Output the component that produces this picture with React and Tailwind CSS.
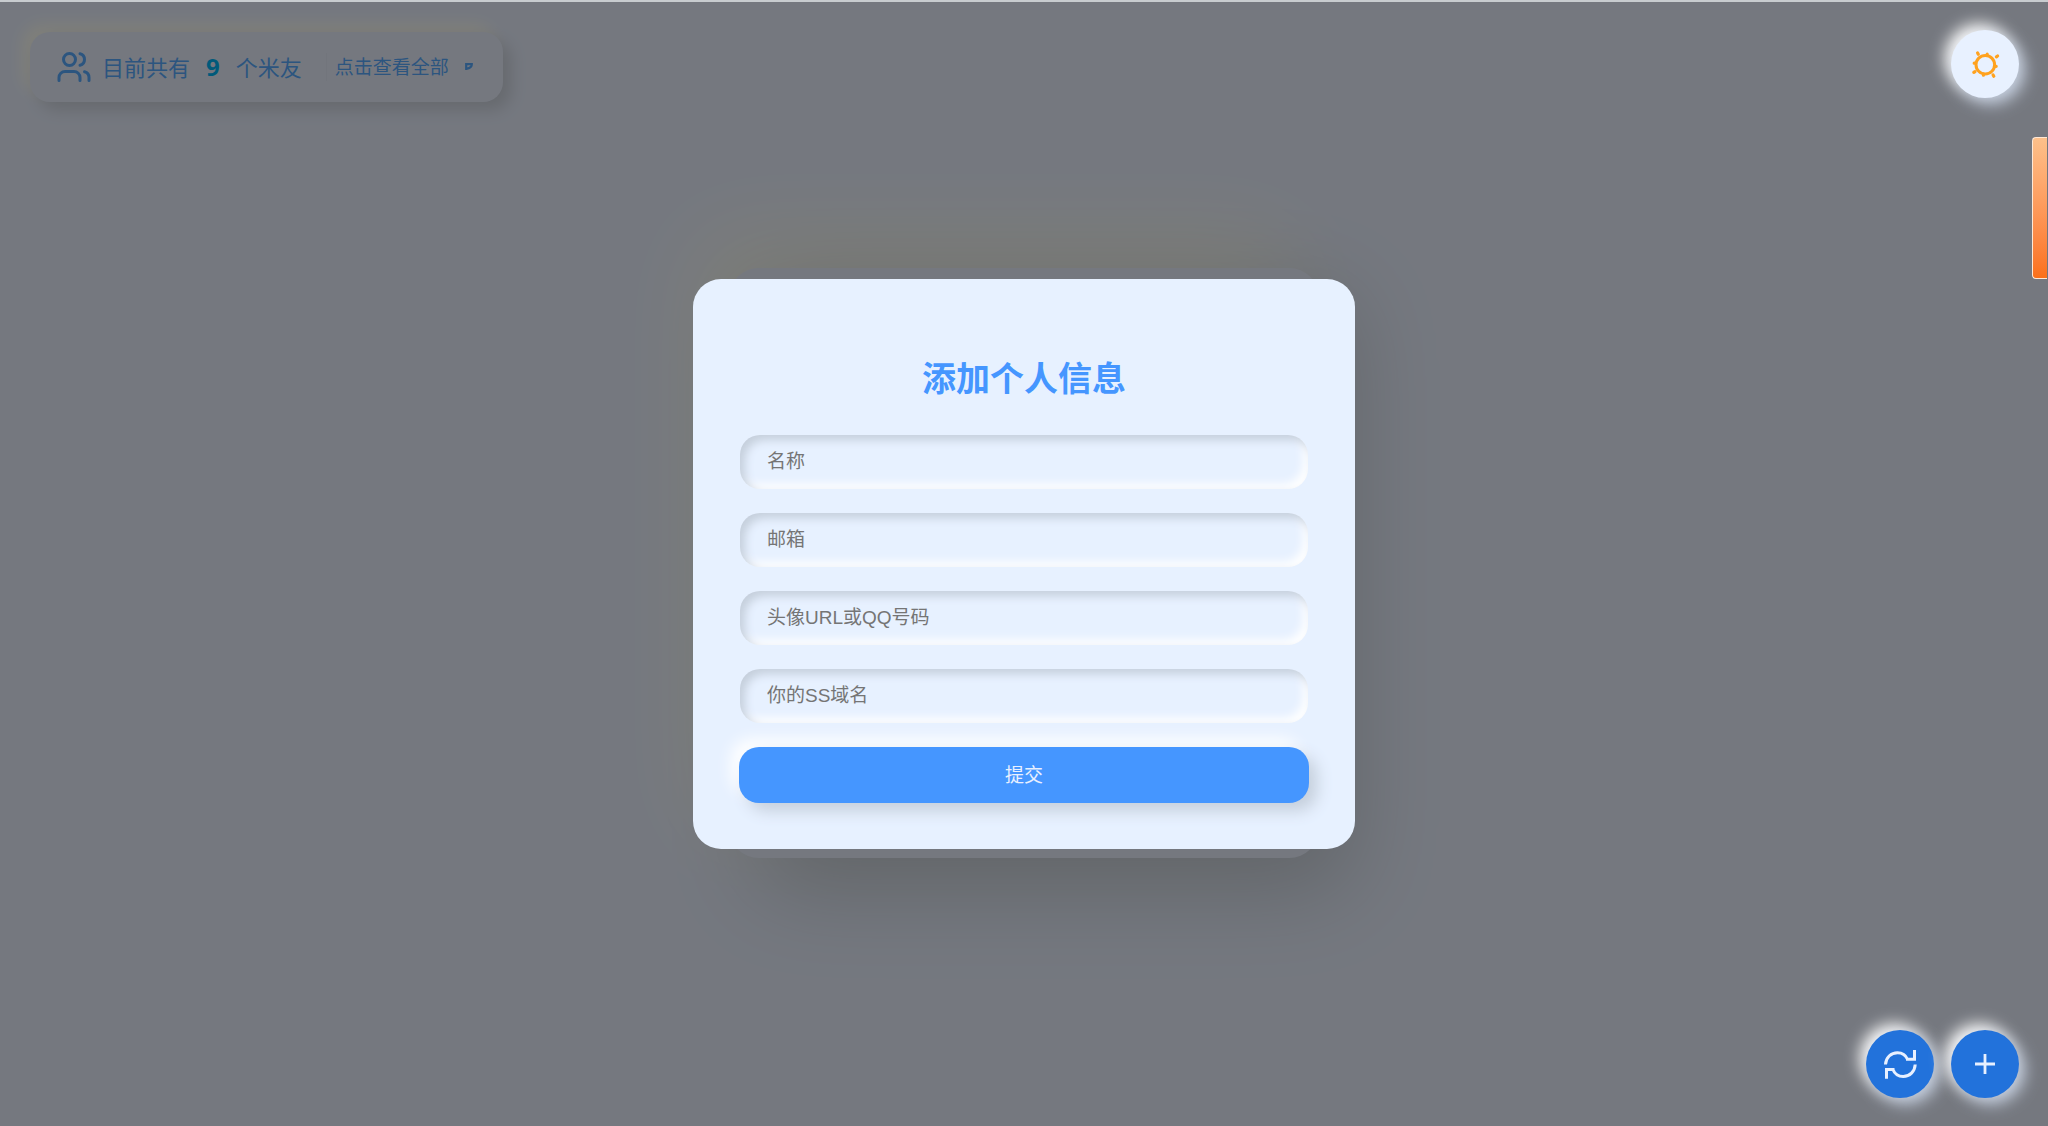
import { useState } from "react";
import { Users } from "lucide-react";

const fields = [
  { id: "name", label: "名称" },
  { id: "email", label: "邮箱" },
  { id: "avatar", label: "头像URL或QQ号码" },
  { id: "domain", label: "你的SS域名" },
];

const SunIcon = () => (
  <svg viewBox="0 0 40 40" className="h-10 w-10" fill="none" stroke="#ffa21f" strokeLinecap="round">
    <circle cx="20.3" cy="20.7" r="9.3" strokeWidth="3" />
    <path
      d="M22.2 10.2v1M31.2 22.3h-1M18.4 31.2v-1M9.2 19.2h1M12.6 9l.7 1.2M32.6 12l-1.2.8M28.8 32.2l-.7-1.2M8.8 28.4l1.2-.8"
      strokeWidth="3.2"
    />
  </svg>
);

const RefreshIcon = () => (
  <svg viewBox="0 0 40 40" className="h-10 w-10" fill="none" stroke="#e8f0ff" strokeWidth="3">
    <path d="M5.5 20.5C5.8 13.5 11 8.7 17.5 8.7c4.6 0 8.3 2.5 10 6.600H34.500M26 15.300h8.500V6" />
    <path d="M35.200 20.500c-.3 7-5.500 12-12 12-4.700 0-8.500-2.600-10.300-7H6.500M14.500 25.500h-8v9.300" />
  </svg>
);

const PlusIcon = () => (
  <svg viewBox="0 0 20 20" className="h-5 w-5" stroke="#e8f0ff" strokeWidth="2.8">
    <path d="M10 0v20M0 10h20" />
  </svg>
);

const RoundButton = ({ label, className, children }) => (
  <button
    aria-label={label}
    className={`flex h-[68px] w-[68px] items-center justify-center rounded-full shadow-[6px_6px_16px_#c5cfdf,-6px_-6px_16px_#ffffff] ${className}`}
  >
    {children}
  </button>
);

const App = () => {
  const [form, setForm] = useState({ name: "", email: "", avatar: "", domain: "" });

  return (
    <div className="relative min-h-screen overflow-hidden bg-[#eaf1ff] font-['Noto_Sans','Noto_Sans_CJK_SC',sans-serif]">
      <header className="flex p-[30px] pt-8">
        <div className="flex h-[70px] items-center rounded-[20px] bg-[#eaf1ff] px-[26px] text-[#58aaff] shadow-[8px_8px_16px_#cdd3dd,-8px_-8px_16px_#fffff4]">
          <Users className="h-9 w-9" />
          <p className="ml-2.5 flex items-center text-[22px]">
            目前共有
            <strong className="mx-4 text-2xl text-[#00b4f5]">9</strong>
            个米友
          </p>
          <a href="#all" className="ml-6 flex items-center border-l border-[#e4ebf8] pl-2 text-[19px]">
            点击查看全部
            <svg viewBox="0 0 8 8" className="ml-4 mr-1 h-2 w-2" fill="none" stroke="currentColor" strokeWidth="2.2">
              <path d="M1.200 7V1.200h5.600c0 2.400-2 3.800-4.600 4.400" />
            </svg>
          </a>
        </div>
      </header>

      {/* page card, mostly hidden behind the dialog */}
      <div className="absolute inset-0 flex items-center justify-center">
        <div className="h-[590px] w-[590px] rounded-[30px] bg-[#eaf1ff] shadow-[30px_30px_90px_#c1c8d0,-30px_-30px_90px_#fffff0]" />
      </div>

      <div className="absolute inset-0 flex items-center justify-center border-t-2 border-[#c8cccf] bg-black/50 bg-clip-padding">
        <form
          onSubmit={(e) => e.preventDefault()}
          className="flex w-[662px] flex-col rounded-[28px] bg-[#e7f1ff] px-[46px] pt-[78px] pb-[46px] text-[19px]"
        >
          <h2 className="mb-9 text-center text-[34px] leading-[42px] font-bold text-[#4596ff]">
            添加个人信息
          </h2>
          {fields.map((f) => (
            <input
              key={f.id}
              id={f.id}
              aria-label={f.label}
              placeholder={f.label}
              value={form[f.id]}
              onChange={(e) => setForm({ ...form, [f.id]: e.target.value })}
              className="mx-px mb-6 h-[54px] rounded-[20px] px-[27px] font-['Liberation_Sans','Noto_Sans_CJK_SC',sans-serif] shadow-[inset_5px_5px_10px_#c5cfdc,inset_-5px_-5px_10px_#ffffff] outline-none placeholder:text-[#757575]"
            />
          ))}
          <button className="h-14 rounded-[20px] bg-[#4596ff] text-[#e8f0ff] shadow-[8px_8px_16px_#c5cfdc,-8px_-8px_16px_#ffffff]">
            提交
          </button>
        </form>
      </div>

      <div className="absolute top-[30px] right-[29px]">
        <RoundButton label="切换主题" className="bg-[#e8f1ff]">
          <SunIcon />
        </RoundButton>
      </div>

      <div className="absolute top-[137px] right-px h-[142px] w-[15px] rounded-l-[4px] border border-r-0 border-[#ffe8d5] bg-linear-to-b from-[#fdc08a] to-[#fb7018]" />

      <div className="absolute right-[29px] bottom-7 flex gap-[17px]">
        <RoundButton label="刷新" className="bg-[#2272db]">
          <RefreshIcon />
        </RoundButton>
        <RoundButton label="添加" className="bg-[#2272db]">
          <PlusIcon />
        </RoundButton>
      </div>
    </div>
  );
};

export default App;
